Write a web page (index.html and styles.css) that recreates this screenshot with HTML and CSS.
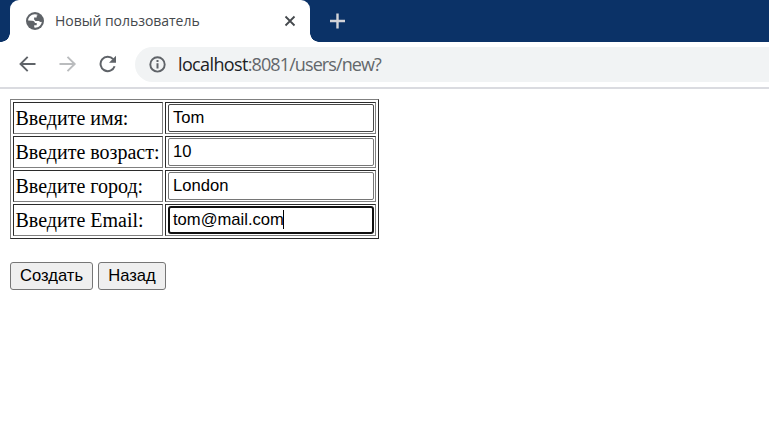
FILE: index.html
```html
<!DOCTYPE html>
<html lang="ru">
<head>
<meta charset="utf-8">
<title>Новый пользователь</title>
<link rel="stylesheet" href="styles.css">
</head>
<body>
<header class="tabs">
  <div class="tab">
    <svg class="globe" width="18" height="18" viewBox="0 0 18 18"><circle cx="9" cy="9" r="9" fill="#5f6368"/><path d="M8.8 2.2C5 2.2 2.1 5.2 2.1 8.6l4.1.1c1.8.1 2.7 1 2.7 2.3h1.8v2.2H8.2v2.4c3.9.6 7.2-2.2 7.6-5.8-1 .6-2.2.3-2.8-.8H9.5L8.1 7.5V5.4h2.6V3.6L12 2.9C11 2.4 10 2.2 8.8 2.2z" fill="#fff"/></svg>
    <span class="title">Новый пользователь</span>
    <svg class="close" width="12" height="12" viewBox="0 0 12 12"><path d="M1.5 1.5l9 9m0-9l-9 9" stroke="#45494d" stroke-width="1.8"/></svg>
  </div>
  <svg class="plus" width="16" height="16" viewBox="0 0 16 16"><path d="M7.5 .5v15M0 8h15" stroke="#d2d3d8" stroke-width="2.4"/></svg>
</header>
<nav class="toolbar">
  <svg class="nav" width="18" height="18" viewBox="0 0 18 18"><path d="M16.5 9H2M8.7 1.8L1.5 9l7.2 7.2" fill="none" stroke="#5f6368" stroke-width="1.9"/></svg>
  <svg class="nav" width="18" height="18" viewBox="0 0 18 18"><path d="M.5 9H15M8.5 1.8L15.7 9l-7.2 7.2" fill="none" stroke="#babcbe" stroke-width="1.9"/></svg>
  <svg class="nav" width="18" height="18" viewBox="0 0 18 18"><path d="M14.2 4.2A7.2 7.2 0 1 0 15.6 11.2" fill="none" stroke="#5f6368" stroke-width="2"/><path d="M17 .8v7h-7z" fill="#5f6368"/></svg>
  <div class="address">
    <svg width="18" height="18" viewBox="0 0 18 18"><circle cx="9.5" cy="9.4" r="7.2" fill="none" stroke="#5f6368" stroke-width="1.9"/><path d="M9.5 5v2M9.5 8.3v5.2" stroke="#5f6368" stroke-width="2"/></svg>
    <span class="url"><b>localhost</b>:8081/users/new?</span>
  </div>
</nav>
<main>
  <table>
    <tr><td>Введите имя:</td><td><div class="field dark">Tom</div></td></tr>
    <tr><td>Введите возраст:</td><td><div class="field">10</div></td></tr>
    <tr><td>Введите город:</td><td><div class="field">London</div></td></tr>
    <tr><td>Введите Email:</td><td><div class="field focus">tom@mail.com<i class="caret"></i></div></td></tr>
  </table>
  <div class="actions"><button class="create">Создать</button><button class="back">Назад</button></div>
</main>
</body>
</html>
```
FILE: styles.css
```css
* { box-sizing: border-box; }
body { margin: 0; background: #fff; color: #000; overflow: hidden; }
svg { display: block; flex: none; }
.tabs { height: 42px; background: #0b3267; display: flex; padding-left: 10px; }
.tab { position: relative; width: 300px; height: 42px; background: #fff; border-radius: 9px 9px 0 0; display: flex; align-items: center; padding: 0 14px 0 16px; }
.tab::before, .tab::after { content: ""; position: absolute; bottom: 0; width: 9px; height: 9px; }
.tab::before { left: -9px; background: radial-gradient(circle at 0 0, transparent 8.5px, #fff 9px); }
.tab::after { right: -9px; background: radial-gradient(circle at 100% 0, transparent 8.5px, #fff 9px); }
.title { margin-left: 11px; font: 14px/20px "Open Sans", "Noto Sans", sans-serif; color: #45494d; white-space: nowrap; letter-spacing: -0.03px; }
.close { margin-left: auto; }
.plus { margin: 13px 0 0 20px; }
.toolbar { height: 47px; border-bottom: 2px solid #dadbe0; padding: 0 0 1px 19px; display: flex; align-items: center; }
.nav { margin-right: 22px; }
.address { height: 35px; flex: 1; margin: 0 0 0 -4px; border-radius: 18px 0 0 18px; background: #f1f3f4; display: flex; align-items: center; padding-left: 13px; }
.url { margin-left: 12px; font: 18px/26px "Open Sans", "Noto Sans", sans-serif; color: #63676b; white-space: nowrap; letter-spacing: -0.9px; }
.url b { font-weight: 400; color: #202124; letter-spacing: -0.63px; }
main { padding: 10px; }
table { width: 369px; table-layout: fixed; border: 1px solid; border-color: #808080 #2b2b2b #2b2b2b #808080; border-spacing: 2px; }
td { height: 32px; padding: 0 2px 0 1.5px; border: 1px solid; border-color: #2b2b2b #808080 #808080 #2b2b2b; font: 20px/28px "Liberation Serif", "Times New Roman", serif; white-space: nowrap; }
td:first-child { width: 150px; }
td:last-child { padding: 1px 1px 1px 2px; }
.field { height: 28px; border: 1px solid #767676; border-radius: 2px; padding: 0 4px; font: 16.6px/26px "Liberation Sans", Arial, sans-serif; }
.dark { border-color: #484848; }
.focus { border: 2px solid #101010; border-radius: 3px; line-height: 24px; padding: 0 3px; }
.caret { display: inline-block; width: 1px; height: 19px; background: #000; vertical-align: -4px; margin-left: -1px; }
.actions { display: flex; gap: 5px; margin-top: 23px; }
button { height: 28px; padding: 0; border: 1px solid #767676; border-radius: 3px; background: #efefef; color: #000; font: 16.6px/24px "Liberation Sans", Arial, sans-serif; }
.create { width: 83px; }
.back { width: 68px; }
```
